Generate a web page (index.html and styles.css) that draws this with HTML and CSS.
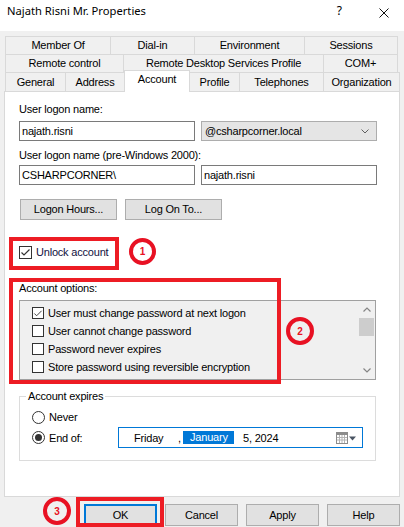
FILE: index.html
```html
<!DOCTYPE html>
<html>
<head>
<meta charset="utf-8">
<title>Najath Risni Mr. Properties</title>
<link rel="stylesheet" href="styles.css">
</head>
<body>
<div class="titlebar">
  <span class="title">Najath Risni Mr. Properties</span>
  <span class="help">?</span>
  <svg class="close" width="10" height="10" viewBox="0 0 10 10"><path d="M0.5 0.5L9.5 9.5M9.5 0.5L0.5 9.5" stroke="#111" stroke-width="1" fill="none"/></svg>
</div>

<div class="tabs">
  <div class="tabrow">
    <div class="tab t-member">Member Of</div>
    <div class="tab t-dialin">Dial-in</div>
    <div class="tab t-env">Environment</div>
    <div class="tab t-sess">Sessions</div>
  </div>
  <div class="tabrow">
    <div class="tab t-remote">Remote control</div>
    <div class="tab t-rds">Remote Desktop Services Profile</div>
    <div class="tab t-com">COM+</div>
  </div>
  <div class="tabrow last">
    <div class="tab t-general">General</div>
    <div class="tab t-address">Address</div>
    <div class="tab t-account selected">Account</div>
    <div class="tab t-profile">Profile</div>
    <div class="tab t-tel">Telephones</div>
    <div class="tab t-org">Organization</div>
  </div>
</div>

<div class="panel">
  <div class="lbl first">User logon name:</div>
  <div class="fieldrow">
    <div class="input">najath.risni</div>
    <div class="select">@csharpcorner.local
      <svg class="chev" width="8" height="5" viewBox="0 0 8 5"><path d="M0.5 0.5L4 4L7.5 0.5" stroke="#606060" stroke-width="1" fill="none"/></svg>
    </div>
  </div>
  <div class="lbl second">User logon name (pre-Windows 2000):</div>
  <div class="fieldrow tight">
    <div class="input">CSHARPCORNER\</div>
    <div class="input">najath.risni</div>
  </div>
  <div class="btnrow">
    <div class="btn wide">Logon Hours...</div>
    <div class="btn wide">Log On To...</div>
  </div>

  <div class="unlock">
    <span class="cb"><svg width="11" height="11" viewBox="0 0 11 11"><path d="M1.5 5.5L4 8L9.5 2.5" stroke="#333" stroke-width="1.2" fill="none"/></svg></span>
    <span class="cbtext">Unlock account</span>
  </div>

  <div class="lbl opts">Account options:</div>
  <div class="listbox">
    <div class="items">
      <div class="item"><span class="cb"><svg width="11" height="11" viewBox="0 0 11 11"><path d="M1.5 5.5L4 8L9.5 2.5" stroke="#444" stroke-width="1.1" fill="none"/></svg></span><span class="cbtext">User must change password at next logon</span></div>
      <div class="item"><span class="cb"></span><span class="cbtext">User cannot change password</span></div>
      <div class="item"><span class="cb"></span><span class="cbtext">Password never expires</span></div>
      <div class="item"><span class="cb"></span><span class="cbtext">Store password using reversible encryption</span></div>
    </div>
    <div class="scrollbar">
      <div class="sarrow"><svg width="8" height="5" viewBox="0 0 8 5"><path d="M0.5 4.5L4 1L7.5 4.5" stroke="#858585" stroke-width="1.2" fill="none"/></svg></div>
      <div class="thumb"></div>
      <div class="strack"></div>
      <div class="sarrow"><svg width="8" height="5" viewBox="0 0 8 5"><path d="M0.5 0.5L4 4L7.5 0.5" stroke="#858585" stroke-width="1.2" fill="none"/></svg></div>
    </div>
  </div>

  <fieldset class="expires">
    <legend>Account expires</legend>
    <div class="radiorow">
      <span class="radio"></span><span class="rtext">Never</span>
    </div>
    <div class="radiorow endrow">
      <span class="radio on"></span><span class="rtext endof">End of:</span>
      <div class="datepicker">
        <span class="d-day">Friday</span>
        <span class="d-comma">,</span>
        <span class="d-month">January</span>
        <span class="d-rest">5, 2024</span>
        <svg class="cal" width="21" height="12" viewBox="0 0 21 12">
          <rect x="0.5" y="0.5" width="11" height="11" fill="#fff" stroke="#8c8c8c"/>
          <rect x="1" y="1" width="10" height="2" fill="#8c8c8c"/>
          <path d="M3.5 3v8M6 3v8M8.5 3v8M1 5.5h10M1 8h10" stroke="#b4b4b4" stroke-width="1"/>
          <path d="M13 4.5h7l-3.5 4z" fill="#4a5563"/>
        </svg>
      </div>
    </div>
  </fieldset>
</div>

<div class="footer">
  <div class="btn ok">OK</div>
  <div class="btn">Cancel</div>
  <div class="btn">Apply</div>
  <div class="btn">Help</div>
</div>

<div class="annot box1"></div>
<div class="annot box2"></div>
<div class="annot box3"></div>
<div class="annot circle c1">1</div>
<div class="annot circle c2">2</div>
<div class="annot circle c3">3</div>
</body>
</html>
```

FILE: styles.css
```css
* { box-sizing: border-box; }
html, body { margin: 0; padding: 0; }
body {
  width: 404px;
  height: 527px;
  overflow: hidden;
  position: relative;
  background: #f0f0f0;
  font-family: "Liberation Sans", Arial, sans-serif;
  font-size: 11px;
  letter-spacing: -0.2px;
  color: #000;
}

/* title bar */
.titlebar {
  height: 31px;
  background: #fff;
  display: flex;
  align-items: flex-start;
  padding: 3px 0 0 7px;
}
.title {
  flex: 1;
  font-family: "Noto Sans", sans-serif;
  font-size: 11.2px;
  line-height: 16px;
  letter-spacing: 0;
}
.help {
  font-family: "Noto Sans", sans-serif;
  font-size: 12px;
  line-height: 16px;
  letter-spacing: 0;
  margin-right: 37px;
}
.close { margin: 5px 15px 0 0; }

/* tabs */
.tabs { padding: 5px 0 0 5px; }
.tabrow { display: flex; height: 18px; }
.tabrow.last { height: 19px; }
.tab {
  height: 18px;
  border: 1px solid #d9d9d9;
  border-bottom: none;
  margin-left: -1px;
  text-align: center;
  line-height: 17px;
  white-space: nowrap;
  background: #f0f0f0;
}
.tab:first-child { margin-left: 0; }
.tabrow.last .tab { height: 19px; line-height: 18px; }
.tabrow.last .tab.selected {
  position: relative;
  z-index: 2;
  height: 22px;
  margin-top: -2px;
  margin-bottom: -1px;
  line-height: 17px;
  background: #fff;
}
.t-member { width: 106px; }
.t-dialin { width: 85px; }
.t-env { width: 111px; }
.t-sess { width: 94px; }
.t-remote { width: 119px; }
.t-rds { width: 201px; }
.t-com { width: 75px; }
.t-general { width: 61px; }
.t-address { width: 60px; }
.t-account { width: 66px; }
.t-profile { width: 51px; }
.t-tel { width: 85px; }
.t-org { width: 77px; }

/* panel */
.panel {
  margin: 0 4px;
  height: 406px;
  background: #fff;
  border: 1px solid #d9d9d9;
  padding: 11px 14px 0;
}
.lbl { line-height: 13px; height: 13px; white-space: nowrap; }
.lbl.second { margin-top: 8px; }
.lbl.opts { margin-top: 23px; }

.fieldrow { display: flex; gap: 6px; margin-top: 5px; }
.fieldrow.tight { margin-top: 3px; }
.input, .select {
  width: 176px;
  height: 20px;
  border: 1px solid #7a7a7a;
  background: #fff;
  padding-left: 2px;
  line-height: 18px;
  white-space: nowrap;
}
.select {
  background: #e5e5e5;
  border-color: #adadad;
  display: flex;
  align-items: center;
  justify-content: space-between;
  padding: 0 7px 0 3px;
}
.chev { display: block; }

.btnrow { display: flex; gap: 8px; margin: 14px 0 0 1px; }
.btn {
  width: 73px;
  height: 22px;
  background: #e1e1e1;
  border: 1px solid #adadad;
  text-align: center;
  line-height: 20px;
}
.btn.wide { width: 97px; height: 21px; line-height: 19px; }

.cb {
  width: 13px;
  height: 13px;
  border: 1px solid #333;
  background: #fff;
  flex: none;
  display: flex;
}
.cb svg { display: block; }
.cbtext { margin-left: 4px; white-space: nowrap; }

.unlock {
  display: flex;
  align-items: center;
  height: 13px;
  margin-top: 26px;
  line-height: 13px;
}
.unlock .cbtext { color: #101040; }

.listbox {
  margin-top: 5px;
  width: 357px;
  height: 80px;
  border: 1px solid #a0a0a0;
  background: #f0f0f0;
  display: flex;
}
.items { flex: 1; padding: 3px 0 0 12px; }
.item { display: flex; align-items: center; height: 18px; }
.item .cb { width: 12px; height: 12px; }

.scrollbar {
  width: 17px;
  display: flex;
  flex-direction: column;
  background: #f0f0f0;
}
.sarrow { height: 17px; display: flex; align-items: center; justify-content: center; }
.thumb { height: 18px; margin: 0 1px 0 1px; background: #cdcdcd; }
.strack { flex: 1; }

/* account expires group */
.expires {
  margin: 10px 0 0;
  width: 357px;
  height: 71px;
  border: 1px solid #dcdcdc;
  padding: 4px 0 0 0;
  min-width: 0;
}
.expires legend {
  margin-left: 6px;
  padding: 0 2px;
  line-height: 13px;
}
.radiorow { display: flex; align-items: center; height: 20px; padding-left: 12px; }
.endrow { height: 21px; }
.radio {
  width: 13px;
  height: 13px;
  border: 1px solid #333;
  border-radius: 50%;
  background: #fff;
  flex: none;
  display: flex;
  align-items: center;
  justify-content: center;
}
.radio.on::after {
  content: "";
  width: 7px;
  height: 7px;
  border-radius: 50%;
  background: #333;
}
.rtext { margin-left: 4px; white-space: nowrap; }
.endof { width: 69px; }

.datepicker {
  width: 245px;
  height: 21px;
  border: 1px solid #0078d7;
  background: #fff;
  display: flex;
  align-items: center;
  padding: 0 5px 0 15px;
  white-space: nowrap;
}
.d-day { width: 44px; }
.d-comma { width: 5px; }
.d-month {
  width: 51px;
  height: 13px;
  line-height: 13px;
  padding-left: 7px;
  background: #0078d7;
  color: #fff;
}
.d-rest { margin-left: 9px; flex: 1; }
.cal { display: block; }

/* footer */
.footer {
  display: flex;
  justify-content: flex-end;
  gap: 8px;
  padding-right: 4px;
  margin-top: 7px;
}
.btn.ok { border: 2px solid #0078d7; line-height: 18px; }

/* annotations */
.annot { position: absolute; z-index: 10; }
.box1, .box2, .box3 { border: 4px solid #ed1c24; }
.box1 { left: 9px; top: 237px; width: 110px; height: 33px; }
.box2 { left: 9px; top: 278px; width: 272px; height: 106px; }
.box3 { left: 76px; top: 497px; width: 88px; height: 30px; }
.circle {
  width: 27px;
  height: 27px;
  border: 4px solid #e81123;
  border-radius: 50%;
  color: #e81123;
  font-weight: bold;
  font-size: 10px;
  letter-spacing: 0;
  display: flex;
  align-items: center;
  justify-content: center;
}
.c1 { left: 129px; top: 238px; }
.c2 { left: 286px; top: 317px; width: 28px; height: 28px; }
.c3 { left: 43px; top: 497px; width: 28px; height: 28px; }
```
